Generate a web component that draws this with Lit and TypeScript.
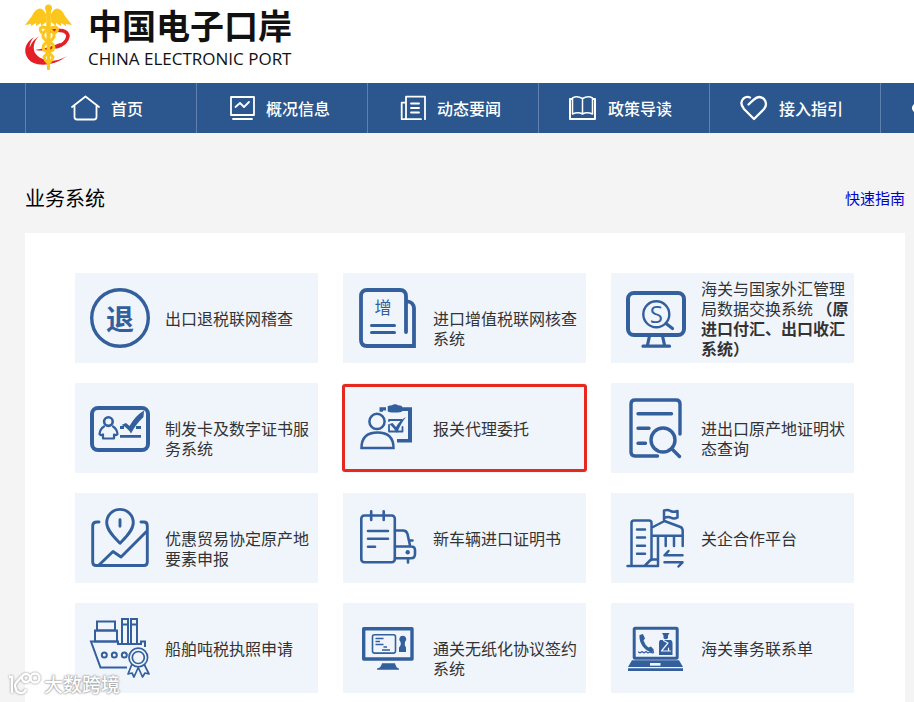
import { LitElement, html, svg, css } from "lit";
import { customElement } from "lit/decorators.js";
import { classMap } from "lit/directives/class-map.js";

const navItems = [
  {
    label: "首页",
    icon: svg`<path d="M1 12 L14.5 1.5 L28 12 M3.5 10.5 V22 Q3.5 24.5 6 24.5 H23 Q25.5 24.5 25.5 22 V10.5"/>`,
  },
  {
    label: "概况信息",
    icon: svg`<rect x="5" y="2" width="23" height="18"/><path d="M9.5 12 L14 8 L18 12 L23 7 M7 24 H26"/>`,
  },
  {
    label: "动态要闻",
    icon: svg`<path d="M9 24.2 V1.7 H28 V24.2 M4.7 7.7 H9 M4.7 7.7 V24.2 H24 M14 8.5 H22 M14 13 H22 M14 17.5 H22"/>`,
  },
  {
    label: "政策导读",
    icon: svg`<path d="M4 4 H2 V24 H27 V4 H25" stroke-width="2"/><path d="M14.5 3.5 Q9 .5 4.5 3 V19 Q10 16.5 14.5 19 Q19 16.5 24.5 19 V3 Q20 .5 14.5 3.5 V19" stroke-width="1.500"/>`,
  },
  {
    label: "接入指引",
    icon: svg`<path d="M9.500 9.500 L14.500 4.800 Q20 -.5 25 4 Q29 9 25 14 L15 24 L5 14 Q0 8 4.500 3.500 Q7.500 1 11 2.500" stroke-width="2.300"/>`,
  },
  {
    label: "",
    icon: svg`<path d="M5 10 Q2 13 5 16 L11 22 M5 10 L13 3" stroke-width="3"/>`,
  },
];

interface System {
  name: string;
  note?: string;
  active?: boolean;
  icon: unknown;
}

const systems: System[] = [
  {
    name: "出口退税联网稽查",
    icon: svg`<circle cx="30" cy="30" r="28.300" stroke-width="3.400"/><text x="30" y="41.500" font-size="28" font-weight="700">退</text>`,
  },
  {
    name: "进口增值税联网核查系统",
    icon: svg`<g stroke-width="3.800"><path d="M48 44 V8 Q48 2 42 2 H9 Q3 2 3 8 V52 Q3 58 9 58 H56 V20 Q55.500 14.500 50 13.500" stroke-linejoin="miter"/></g>
      <path d="M13.500 37.500 H36.500 M13.500 44.500 H36.500" stroke-width="3"/><text x="25" y="25.500" font-size="17">增</text>`,
  },
  {
    name: "海关与国家外汇管理局数据交换系统",
    note: "（原进口付汇、出口收汇系统）",
    icon: svg`<rect x="2" y="5" width="56" height="42" rx="6" stroke-width="4"/><path d="M23.500 48 L21.500 57 M36.500 48 L38.500 57 M17 58.200 H43.500" stroke-width="3.200"/>
      <circle cx="30.300" cy="26.300" r="13" stroke-width="2.400"/><path d="M40 35.500 L46.500 40.500" stroke-width="3.200"/><text class="latin" x="30.300" y="35" font-size="24">S</text>`,
  },
  {
    name: "制发卡及数字证书服务系统",
    icon: svg`<rect x="2" y="10" width="56" height="42" rx="6" stroke-width="4"/><circle cx="18.400" cy="23.600" r="4.300" stroke-width="2.600"/>
      <path d="M14 28.500 Q10 31 9.500 36 Q11 38 13 36.500 V40.500 H24 V36.500 Q26 38 27.500 36 Q27 31 23 28.500" stroke-width="2.200"/>
      <path d="M30 38.400 H51 M30 29.500 H34 M46 29.500 H51" stroke-width="2.800" stroke-linecap="butt"/>
      <path class="solid" d="M31.500 27 L36 25 L39.500 28 Q45 18 54 12.500 L53.500 19 Q46 26 41 35.500 Q37 29 31.500 27 Z"/>`,
  },
  {
    name: "报关代理委托",
    active: true,
    icon: svg`<circle cx="19" cy="23.400" r="7.600" stroke-width="2.500"/><path d="M3.500 50 Q3.500 34.500 19.500 34.500 Q35.500 34.500 35.500 50 Z" stroke-width="2.500" stroke-linejoin="miter"/>
      <path class="solid" d="M21.500 9.300 H28 V12.500 H25 V13.800 H21.500 Z M29.700 8.500 Q30 7.500 34 7.300 Q35 6.300 37 6.300 Q39 6.300 40 7.300 Q44 7.500 44.500 9.300 H54 V44.500 H39 V41 H50 V13 H44.500 Q43 14.500 37 14.500 Q30 14.500 29.700 13 Z"/>
      <path d="M31 23 V22 H43.500 M31 27 V33.500 H44.500 V29" stroke-width="1.800"/><path class="solid" d="M31.500 26 L34.500 25 L38 29 Q42 22 48 19 Q43 25 39 35 Q35 29 31.500 26 Z"/>`,
  },
  {
    name: "进出口原产地证明状态查询",
    icon: svg`<g stroke-width="3.400"><path d="M54 36 V6 Q54 2 50 2 H9 Q5 2 5 6 V54 Q5 58 9 58 H31.500"/><path d="M12 15.700 H45.500 M12 30.300 H23 M12 45.300 H19.500"/><circle cx="37" cy="42" r="12"/><path d="M46.500 51.500 L53.500 58.500"/></g>`,
  },
  {
    name: "优惠贸易协定原产地要素申报",
    icon: svg`<g stroke-width="2.900"><path d="M30 35.300 C25 30 16.700 22.500 16.700 14.700 A13.300 13.300 0 0 1 43.300 14.700 C43.300 22.500 35 30 30 35.300 Z M30 11.800 V18.300"/>
      <path d="M9 14 H7 Q2.700 14 2.700 18 V54 Q2.700 57.500 6 57.500 H54 Q57.300 57.500 57.300 54 V18 Q57.300 14 54 14 H51 M9 57 L23 43.500 L31 49 L57 23"/></g>`,
  },
  {
    name: "新车辆进口证明书",
    icon: svg`<g stroke-width="2.600"><rect x="3.300" y="7.500" width="33.500" height="46.800" rx="3"/><path d="M13.200 3.300 V12 M25.700 3.300 V12 M10 23 H30 M10 30.700 H30 M10 38.700 H17"/>
      <path d="M37 22.500 H45 Q48.500 22.500 49.500 26 L52 37.500 M51 32.500 H54.500 M37 38.500 H53 Q57 38.500 57 42 V46 Q57 50.300 53 50.300 H37 M50 51 V54.500"/></g><circle class="solid" cx="49.700" cy="44.300" r="2.200"/>`,
  },
  {
    name: "关企合作平台",
    icon: svg`<g stroke-width="2.500"><path d="M5.500 57 V15 Q5.500 12.500 8 12.500 H23 Q25.500 12.500 25.500 15 V52 M1.500 58 H32 V29 M19 57.500 L25 51.500 H31 M11 21.500 H19 M11 29.500 H19 M11 37.700 H19 M11 45.700 H19"/>
      <path d="M27 19 L38.500 13 L54.500 19 Q56.700 20 56.700 23 V38 M27 27.700 H56 M39.700 29 V38 M48 29 V38 M38 13 V2.500 Q42 1.500 44.500 3 Q48 4.500 51.500 3 V9.500 Q48 11.500 44.500 9.500 Q42 8.500 38 10"/>
      <path d="M42.500 43 L38.500 47.300 H56.500 M38.500 54.300 H56.500 L52.500 58.500"/></g>`,
  },
  {
    name: "船舶吨税执照申请",
    icon: svg`<g stroke-width="2" stroke-linejoin="miter" stroke-linecap="butt"><path d="M37 49.500 H10.500 L1 23.500 H28 V26 H51 V23.500 H55 V29"/><rect x="7" y="3.500" width="18" height="9"/><rect x="5" y="12.500" width="22" height="11"/>
      <path d="M32 26 V1 H38 V26 M41 26 V1 H47 V26 M32 6.500 H38 M41 6.500 H47"/><circle cx="14.300" cy="37" r="2.500"/><circle cx="24.300" cy="37" r="2.500"/><circle cx="34.300" cy="37" r="2.500"/></g>
      <g stroke-width="1.700"><path class="paper" d="M42 46 L38 56 L42 55 L44 59 L48 50 M54 46 L59 56 L55 55 L52.500 59 L48.500 50"/><circle class="paper" cx="48.300" cy="39.500" r="9.300"/><circle cx="48.300" cy="39.500" r="6"/></g>`,
  },
  {
    name: "通关无纸化协议签约系统",
    icon: svg`<rect x="5.700" y="10.700" width="48.300" height="30.300" stroke-width="3.400"/><path class="solid" d="M24 45.300 H37 Q38 50 41 50.500 V51.700 H19 V50.500 Q23 50 24 45.300 Z"/>
      <rect x="14.500" y="16.800" width="23" height="18.300" rx="2" stroke-width="1.600"/><path d="M17.500 20.500 H25.500 M17.500 23.500 H22 M17.500 26.500 H25.500 M25.500 29 H29 M24 32 H32" stroke-width="1.400" stroke-linecap="butt"/>
      <path class="solid" d="M44.700 17.800 A3.500 3.500 0 0 1 47 24 Q46 27 48 29.500 V34 H41 V29.500 Q43.500 27 42.500 24 A3.500 3.500 0 0 1 44.700 17.800 Z"/>`,
  },
  {
    name: "海关事务联系单",
    icon: svg`<rect x="8.200" y="10.200" width="43" height="30" rx="1" stroke-width="3"/><path class="solid" d="M6 42.300 H53 L57 49 H2 Z M2 50.300 H57 V53 H2 Z"/><path class="gap" d="M24 45 H34.500 V47.700 H24 Z"/>
      <path class="solid" d="M13.500 17 L17 16 L19 20.500 L17.500 22.500 Q19 27 22.500 29.500 L25 28.500 L28 32 L26 34.500 Q20 33 16.500 28 Q13 23 13.500 17 Z"/>
      <path d="M27.500 33.500 Q28 36 24 34 L22 35 L20 33.500 L18 35 L16 33.500 L14 35 L12.500 34" stroke-width="1.200"/>
      <path class="solid" d="M36 15 H43.500 L42 17.500 V20 Q39.500 22.500 37.500 20 V17.500 Z M34 22 H45 Q46.500 23 46.500 25 V37 H33 V25 Q33 23 34 22 Z"/><path class="light" d="M37.500 22.500 L42 25 L35.500 33 H44.500 M42.500 30 V33"/>`,
  },
];

@customElement("app-root")
export class AppRoot extends LitElement {
  static styles = css`
    :host {
      display: block;
      position: relative;
      min-height: 100vh;
      overflow: hidden;
      background: #f4f4f4;
      color: #333;
      font: 16px/20px "Noto Sans CJK SC", sans-serif;
    }
    a {
      color: inherit;
      text-decoration: none;
    }
    svg {
      display: block;
      flex: none;
      fill: none;
    }
    .header {
      display: flex;
      gap: 16px;
      height: 83px;
      padding-left: 24px;
      box-sizing: border-box;
      background: #fff;
    }
    .emblem {
      width: 48px;
      height: 72px;
    }
    .brand {
      color: #111;
      white-space: nowrap;
    }
    .brand-name {
      margin: 0;
      font-size: 34px;
      font-weight: 700;
      line-height: 49px;
    }
    .brand-sub {
      margin: 0;
      font: 17px/20px "Open Sans", sans-serif;
    }
    .nav {
      background: #2b578e;
    }
    .nav-list {
      display: flex;
      margin: 0 0 0 25px;
      padding: 0;
      list-style: none;
      overflow: hidden;
    }
    .nav-link {
      display: flex;
      align-items: center;
      justify-content: center;
      gap: 12px;
      flex: none;
      width: 171px;
      height: 50px;
      padding-right: 8px;
      box-sizing: border-box;
      border-left: 1px solid #6080ad;
      color: #fff;
      font-weight: 500;
    }
    .nav-more {
      justify-content: flex-start;
      padding-left: 29px;
    }
    .nav-icon {
      width: 28px;
      height: 26px;
      overflow: visible;
      stroke: #fff;
      stroke-width: 1.8;
      stroke-linecap: round;
      stroke-linejoin: round;
    }
    .main {
      padding: 0 9px 0 25px;
    }
    .section-head {
      display: flex;
      align-items: center;
      justify-content: space-between;
      height: 100px;
      padding-top: 30px;
      box-sizing: border-box;
    }
    .section-title {
      margin: 0;
      color: #000;
      font-size: 20px;
      font-weight: 400;
    }
    .guide {
      color: #00c;
      font-size: 15px;
    }
    .panel {
      display: grid;
      grid-template-columns: repeat(3, 1fr);
      gap: 20px 25px;
      padding: 40px 51px 9px 50px;
      background: #fff;
    }
    .card {
      display: flex;
      gap: 15px;
      min-height: 90px;
      padding-left: 15px;
      box-sizing: border-box;
      background: #f0f5fc;
    }
    .card.active {
      position: relative;
    }
    .card.active::after {
      content: "";
      position: absolute;
      inset: 1px -1px;
      border: 3px solid #e5291f;
      border-radius: 3px;
    }
    .card-icon {
      width: 60px;
      height: 60px;
      margin-top: 15px;
      overflow: visible;
      stroke: #335f9d;
      stroke-linecap: round;
      stroke-linejoin: round;
    }
    .card-icon text {
      fill: #335f9d;
      stroke: none;
      text-anchor: middle;
    }
    .card-icon .latin {
      font-family: "Open Sans", sans-serif;
    }
    .solid {
      fill: #335f9d;
      stroke: none;
    }
    .paper {
      fill: #f0f5fc;
    }
    .gap {
      fill: #f0f5fc;
      stroke: none;
    }
    .light {
      stroke: #f0f5fc;
      stroke-width: 1.2;
    }
    .card-name {
      padding-top: 35px;
    }
    .card-name.long {
      padding-top: 5px;
    }
    .watermark {
      position: absolute;
      left: 8px;
      bottom: 6px;
      display: flex;
      align-items: center;
      gap: 3px;
      color: #fff;
      font-size: 19px;
      font-weight: 500;
      text-shadow: 0 0 2px #888, 0 0 2px #999;
    }
    .watermark-logo {
      width: 33px;
      height: 24px;
      overflow: visible;
      stroke: #fff;
      stroke-width: 2.4;
      filter: drop-shadow(0 0 1px #888);
    }
  `;

  private renderEmblem() {
    return html`<svg class="emblem" viewBox="0 0 48 72" role="img" aria-label="中国电子口岸">
      <path fill="#e41f26" d="M10 37 C2 42 -1 50 3 57 C8 67 27 68 43 56 C33 62 20 63 12 58 C5 53 3 45 10 37 Z M15 36 C6 42 3 51 7 57 C11 62 20 63 28 61 C18 60 11 56 10 50 C9 45 11 40 15 36 Z"/>
      <path stroke="#e41f26" stroke-width="3.600" d="M25 31 Q43 28 44 36 Q43 44 32 47"/>
      <path fill="#e41f26" d="M11 50 Q25 48 36 43 L36 47 Q24 52 11 50 Z"/>
      <g fill="#fcc61c"><circle cx="24.500" cy="8" r="3.500"/>
        <path d="M22 14 Q18 7 14 9 Q10 11 8 16 L1 25 L7 24 L7 26 L12 23 L12 26 L17 23 L17 26 L22 22 Z M27 14 Q31 7 35 9 Q39 11 41 16 L48 25 L42 24 L42 26 L37 23 L37 26 L32 23 L32 26 L27 22 Z"/>
        <path d="M22 10 H27 L26 70 H23 Z"/></g>
      <path stroke="#fcc61c" stroke-width="3" d="M18 33 Q14 28 19 27 Q27 28 30 34 Q31 39 24 42 Q17 45 20 50 Q27 54 29 57 Q28 61 25 63 M31 33 Q36 29 31 27 Q22 28 19 34 Q18 39 25 42 Q32 45 29 50 Q22 54 20 57 Q21 61 24 63"/>
    </svg>`;
  }

  render() {
    return html`
      <header class="header">
        ${this.renderEmblem()}
        <div class="brand">
          <p class="brand-name">中国电子口岸</p>
          <p class="brand-sub">CHINA ELECTRONIC PORT</p>
        </div>
      </header>
      <nav class="nav">
        <ul class="nav-list">
          ${navItems.map(
            (item) => html`<li>
              <a class=${classMap({ "nav-link": true, "nav-more": !item.label })} href="#">
                <svg class="nav-icon" viewBox="0 0 28 26" aria-hidden="true">${item.icon}</svg>${item.label}
              </a>
            </li>`
          )}
        </ul>
      </nav>
      <main class="main">
        <div class="section-head">
          <h2 class="section-title">业务系统</h2>
          <a class="guide" href="#">快速指南</a>
        </div>
        <section class="panel">
          ${systems.map(
            (s) => html`<a class=${classMap({ card: true, active: !!s.active })} href="#">
              <svg class="card-icon" viewBox="0 0 60 60" aria-hidden="true">${s.icon}</svg>
              <span class=${classMap({ "card-name": true, long: !!s.note })}>${s.name} ${s.note ? html`<strong>${s.note}</strong>` : ""}</span>
            </a>`
          )}
        </section>
      </main>
      <div class="watermark">
        <svg class="watermark-logo" viewBox="0 0 33 24" aria-hidden="true">
          <path d="M1 5 H4 V21 M7 12 Q7 21 13 21 Q17 21 18 17 M7 12 L14 4"/>
          <circle cx="18" cy="6" r="4"/><circle cx="27" cy="6" r="4.500"/>
        </svg>
        <span>大数跨境</span>
      </div>
    `;
  }
}
